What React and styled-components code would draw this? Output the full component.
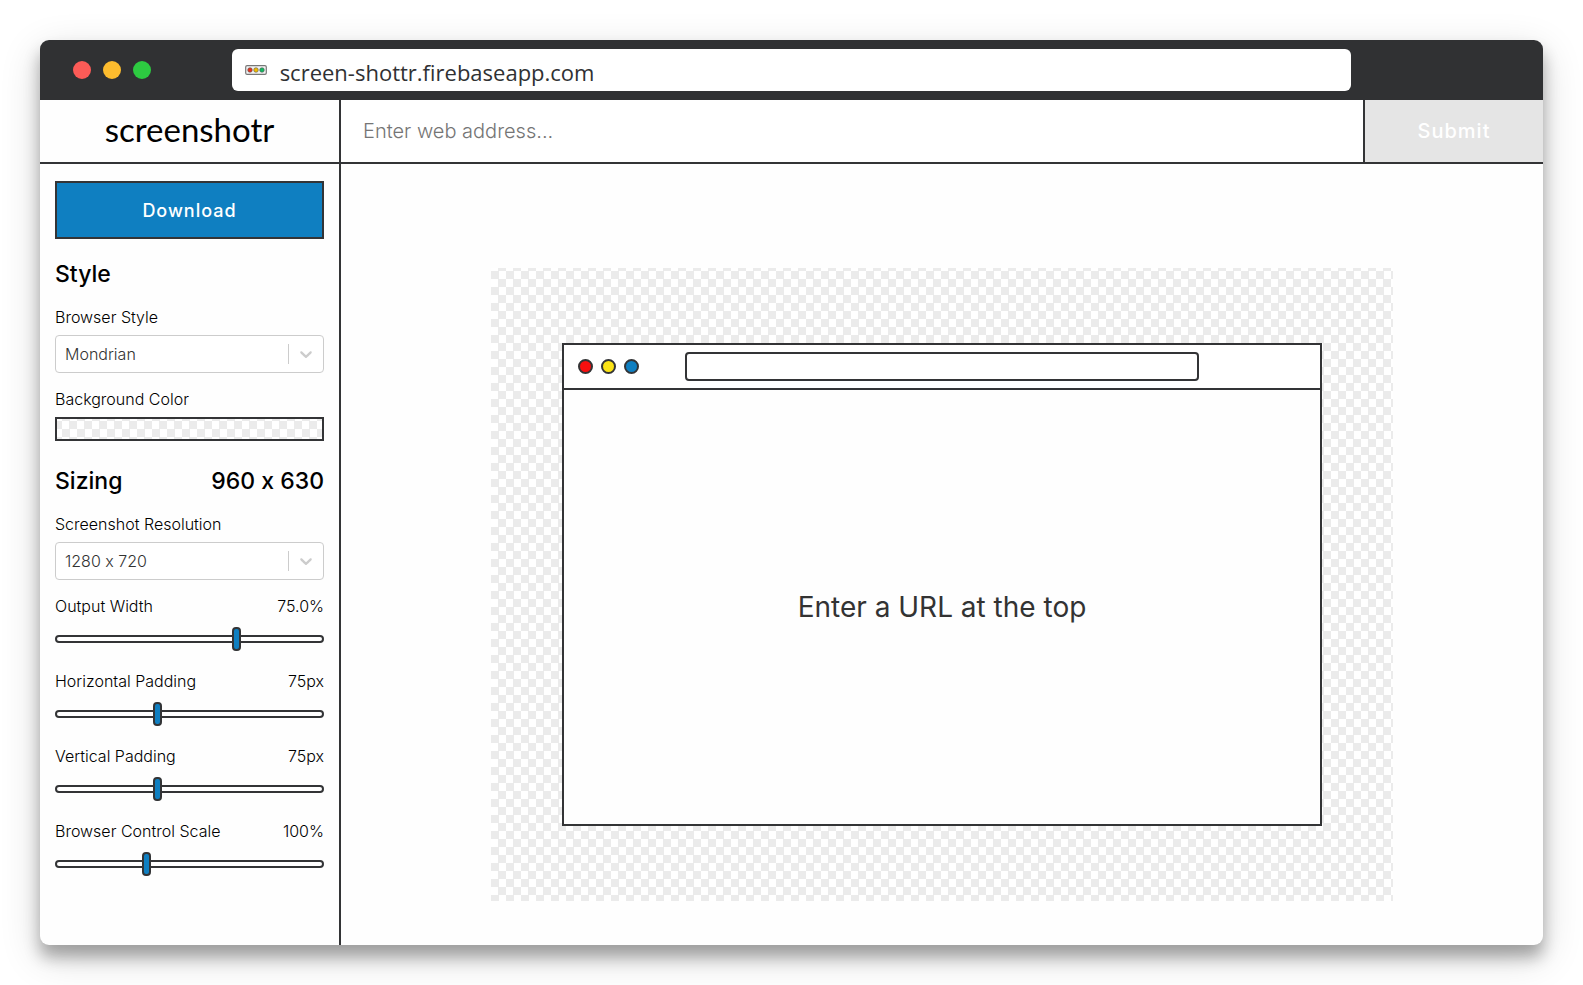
import React, { useState } from "react";
import styled, { createGlobalStyle, css } from "styled-components";

const ink = "#333436";
const blue = "#0f7fc1";

const GlobalStyle = createGlobalStyle`
  *, *::before, *::after { box-sizing: border-box; }
  body {
    margin: 0;
    background: #fff;
    color: #000;
    font-family: Inter, "Open Sans", sans-serif;
    font-variant-ligatures: no-contextual;
  }
  button, input, select {
    margin: 0;
    font: inherit;
    font-variant-ligatures: no-contextual;
  }
`;

const checker = css`
  background-color: #fff;
  background-image: conic-gradient(#ebebeb 25%, #fff 0 50%, #ebebeb 0 75%, #fff 0);
  background-size: 15px 16px;
`;

const Page = styled.div`
  display: flex;
  min-height: 100vh;
  padding: 40px;
`;

const BrowserWindow = styled.div`
  flex: 1;
  min-width: 0;
  display: flex;
  flex-direction: column;
  border-radius: 9px;
  overflow: hidden;
  background: #fefefe;
  box-shadow: 0 12px 16px rgba(0, 0, 0, 0.3), 0 12px 40px rgba(0, 0, 0, 0.16);
`;

const TitleBar = styled.div`
  height: 60px;
  display: grid;
  grid-template-columns: 1fr 74.5% 1fr;
  align-items: center;
  background: #303133;
`;

const Dots = styled.div`
  display: flex;
  gap: ${(p) => (p.$small ? "8px" : "12px")};
  padding-left: ${(p) => (p.$small ? "14px" : "33px")};
`;

const Dot = styled.span`
  width: ${(p) => (p.$outlined ? "15px" : "18px")};
  height: ${(p) => (p.$outlined ? "15px" : "18px")};
  border-radius: 50%;
  background: ${(p) => p.$color};
  border: ${(p) => (p.$outlined ? `2px solid ${ink}` : "none")};
`;

const LocationBar = styled.div`
  height: 42px;
  display: flex;
  align-items: center;
  gap: 13px;
  padding: 0 13px;
  border-radius: 6px;
  background: #fff;
  color: #303133;
  font-family: "Open Sans", "Noto Sans", sans-serif;
  font-size: 22px;
  line-height: 32px;
`;

const LocationText = styled.span`
  padding-top: 4px;
`;

const AppHeader = styled.header`
  display: flex;
  height: 64px;
  border-bottom: 2px solid ${ink};
`;

const Logo = styled.h1`
  width: 301px;
  margin: 0;
  display: flex;
  align-items: center;
  justify-content: center;
  padding-bottom: 4px;
  border-right: 2px solid ${ink};
  font-family: Lato, sans-serif;
  font-size: 33px;
  font-weight: 400;
  line-height: 40px;
`;

const AddressForm = styled.form`
  flex: 1;
  min-width: 0;
  display: flex;
`;

const AddressInput = styled.input`
  flex: 1;
  min-width: 0;
  padding: 0 22px;
  border: 0;
  outline: 0;
  background: #fff;
  font-size: 20px;
  font-weight: 300;
  &::placeholder { color: #757575; opacity: 1; }
`;

const SubmitButton = styled.button`
  width: 180px;
  border: 0;
  border-left: 2px solid ${ink};
  background: #e5e5e5;
  color: #fff;
  font-size: 20px;
  font-weight: 500;
  letter-spacing: 1px;
`;

const Content = styled.div`
  flex: 1;
  display: flex;
`;

const Sidebar = styled.aside`
  width: 301px;
  display: flex;
  flex-direction: column;
  padding: 17px 15px 16px;
  border-right: 2px solid ${ink};
`;

const DownloadButton = styled.button`
  display: block;
  width: 100%;
  height: 58px;
  margin-bottom: 9px;
  border: 2px solid ${ink};
  background: ${blue};
  color: #fff;
  font-size: 18px;
  font-weight: 500;
  letter-spacing: 1px;
`;

const SectionTitle = styled.h2`
  display: flex;
  justify-content: space-between;
  margin: 10px 0 15px;
  font-size: 23px;
  font-weight: 500;
  line-height: 32px;
`;

const Field = styled.div`
  margin-bottom: ${(p) => (p.$slider ? "18px" : "14px")};
`;

const FieldLabel = styled.label`
  display: flex;
  justify-content: space-between;
  margin-bottom: ${(p) => (p.$slider ? "9px" : "6px")};
  font-size: 16px;
  font-weight: 300;
  line-height: 24px;
`;

const SelectBox = styled.div`
  position: relative;
`;

const Select = styled.select`
  display: block;
  width: 100%;
  height: 38px;
  padding: 0 46px 0 9px;
  border: 1px solid #ccc;
  border-radius: 4px;
  background: #fff;
  color: #333;
  font-size: 16px;
  font-weight: 300;
  appearance: none;
`;

const SelectArrow = styled.span`
  position: absolute;
  top: 9px;
  right: 1px;
  display: flex;
  align-items: center;
  justify-content: center;
  width: 35px;
  height: 20px;
  border-left: 1px solid #ccc;
  color: #ccc;
  pointer-events: none;
`;

const Swatch = styled.button`
  ${checker}
  display: block;
  width: 100%;
  height: 24px;
  padding: 0;
  border: 2px solid ${ink};
  background-position: 5px 2px;
`;

const Range = styled.input`
  display: block;
  width: 100%;
  height: 24px;
  appearance: none;
  background: transparent;
  &::-webkit-slider-runnable-track {
    height: 8px;
    border: 2px solid ${ink};
    border-radius: 4px;
    background: #fff;
  }
  &::-webkit-slider-thumb {
    appearance: none;
    width: 9px;
    height: 24px;
    margin-top: -10px;
    border: 2px solid ${ink};
    border-radius: 4px;
    background: ${blue};
  }
`;

const Stage = styled.main`
  flex: 1;
  min-width: 0;
  display: flex;
  justify-content: center;
  padding: 104px 0 44px;
`;

const Backdrop = styled.div`
  ${checker}
  width: 75%;
  display: flex;
  padding: 75px 71px;
  background-position: 0 -5px;
`;

const Preview = styled.div`
  flex: 1;
  display: flex;
  flex-direction: column;
  border: 2px solid ${ink};
  background: #fefefe;
`;

const PreviewBar = styled.div`
  height: 45px;
  display: grid;
  grid-template-columns: 1fr 68% 1fr;
  align-items: center;
  border-bottom: 2px solid ${ink};
  background: #fff;
`;

const PreviewLocation = styled.div`
  height: 29px;
  border: 2px solid ${ink};
  border-radius: 4px;
`;

const PreviewBody = styled.div`
  flex: 1;
  display: flex;
  align-items: center;
  justify-content: center;
  color: #333;
  font-size: 28px;
  line-height: 36px;
`;

function Favicon() {
  return (
    <svg width="22" height="22" viewBox="0 0 22 22" aria-hidden="true">
      <rect x="0.7" y="6.6" width="20.6" height="8.8" rx="1.4" fill="#f4f4f4" stroke="#777" strokeWidth="1.2" />
      <circle cx="5" cy="11" r="2.3" fill="#e8321c" stroke="#555" strokeWidth="0.6" />
      <circle cx="11" cy="11" r="2.3" fill="#f0bc00" stroke="#555" strokeWidth="0.6" />
      <circle cx="17" cy="11" r="2.3" fill="#12b860" stroke="#555" strokeWidth="0.6" />
    </svg>
  );
}

function SelectField({ id, label, options }) {
  return (
    <Field>
      <FieldLabel htmlFor={id}>{label}</FieldLabel>
      <SelectBox>
        <Select id={id}>
          {options.map((o) => (
            <option key={o}>{o}</option>
          ))}
        </Select>
        <SelectArrow>
          <svg width="20" height="20" viewBox="0 0 20 20" fill="currentColor" aria-hidden="true">
            <path d="M4.516 7.548c0.436-0.446 1.043-0.481 1.576 0l3.908 3.747 3.908-3.747c0.533-0.481 1.141-0.446 1.574 0 0.436 0.445 0.408 1.197 0 1.615-0.406 0.418-4.695 4.502-4.695 4.502-0.217 0.223-0.502 0.335-0.787 0.335s-0.57-0.112-0.789-0.335c0 0-4.287-4.084-4.695-4.502s-0.436-1.17 0-1.615z" />
          </svg>
        </SelectArrow>
      </SelectBox>
    </Field>
  );
}

function SliderField({ id, label, min, max, initial, format }) {
  const [value, setValue] = useState(initial);
  return (
    <Field $slider>
      <FieldLabel htmlFor={id} $slider>
        <span>{label}</span>
        <span>{format(value)}</span>
      </FieldLabel>
      <Range id={id} type="range" min={min} max={max} value={value} onChange={(e) => setValue(Number(e.target.value))} />
    </Field>
  );
}

export default function App() {
  return (
    <>
      <GlobalStyle />
      <Page>
        <BrowserWindow>
          <TitleBar>
            <Dots>
              <Dot $color="#fc5b57" />
              <Dot $color="#fdbc2e" />
              <Dot $color="#2dca41" />
            </Dots>
            <LocationBar>
              <Favicon />
              <LocationText>screen-shottr.firebaseapp.com</LocationText>
            </LocationBar>
          </TitleBar>
          <AppHeader>
            <Logo>screenshotr</Logo>
            <AddressForm onSubmit={(e) => e.preventDefault()}>
              <AddressInput type="text" aria-label="Web address" placeholder="Enter web address..." />
              <SubmitButton type="submit" disabled>Submit</SubmitButton>
            </AddressForm>
          </AppHeader>
          <Content>
            <Sidebar>
              <DownloadButton type="button">Download</DownloadButton>
              <SectionTitle>Style</SectionTitle>
              <SelectField id="browser-style" label="Browser Style" options={["Mondrian"]} />
              <Field>
                <FieldLabel htmlFor="background-color">Background Color</FieldLabel>
                <Swatch id="background-color" type="button" />
              </Field>
              <SectionTitle>
                <span>Sizing</span>
                <span>960 x 630</span>
              </SectionTitle>
              <SelectField id="resolution" label="Screenshot Resolution" options={["1280 x 720"]} />
              <SliderField id="output-width" label="Output Width" min={21} max={100} initial={75} format={(v) => `${v.toFixed(1)}%`} />
              <SliderField id="horizontal-padding" label="Horizontal Padding" min={0} max={200} initial={75} format={(v) => `${v}px`} />
              <SliderField id="vertical-padding" label="Vertical Padding" min={0} max={200} initial={75} format={(v) => `${v}px`} />
              <SliderField id="control-scale" label="Browser Control Scale" min={50} max={200} initial={100} format={(v) => `${v}%`} />
            </Sidebar>
            <Stage>
              <Backdrop>
                <Preview>
                  <PreviewBar>
                    <Dots $small>
                      <Dot $outlined $color="#f70f0f" />
                      <Dot $outlined $color="#fbe316" />
                      <Dot $outlined $color={blue} />
                    </Dots>
                    <PreviewLocation />
                  </PreviewBar>
                  <PreviewBody>Enter a URL at the top</PreviewBody>
                </Preview>
              </Backdrop>
            </Stage>
          </Content>
        </BrowserWindow>
      </Page>
    </>
  );
}
